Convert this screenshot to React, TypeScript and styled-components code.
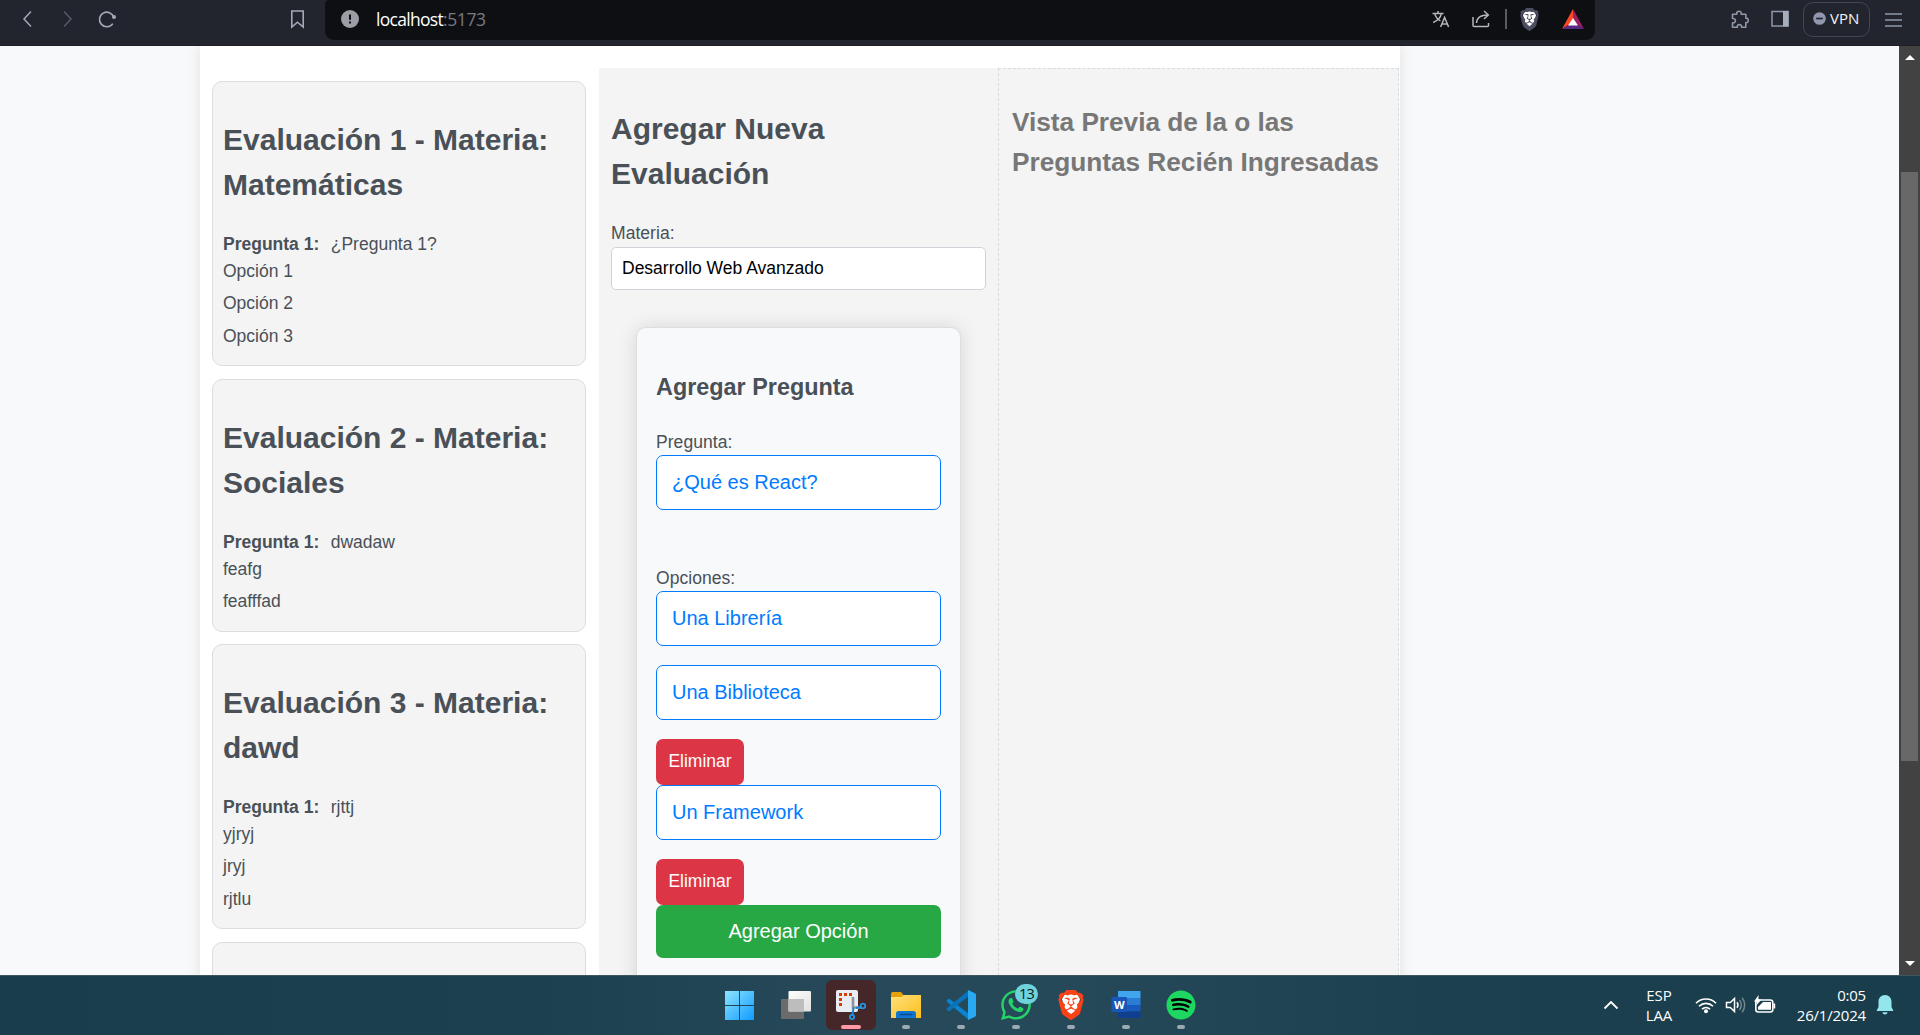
import React from "react";
import styled, { createGlobalStyle, css } from "styled-components";
import { FaBrave, FaSpotify, FaWhatsapp } from "react-icons/fa6";

const ui = `"Open Sans", "Noto Sans", sans-serif`;

const GlobalStyle = createGlobalStyle`
  *, *::before, *::after { box-sizing: border-box; }
  html, body { margin: 0; padding: 0; overflow: hidden; }
  body { font-family: Arial, "Liberation Sans", sans-serif; }
`;

const Screen = styled.div`
  display: flex;
  flex-direction: column;
  width: 1920px;
  height: 1035px;
  overflow: hidden;
`;

/* Browser toolbar */
const Toolbar = styled.header`
  display: flex;
  flex: none;
  height: 46px;
  background: #22252e;
  border-bottom: 1px solid #1f1d26;
  font-family: ${ui};
`;

const NavButtons = styled.nav`
  display: flex;
  align-items: center;
  width: 325px;
  height: 38px;
  padding: 0 18px 0 18px;
  color: #a2a9b8;
  svg { display: block; flex: none; }
`;

const Spacer = styled.span<{ $w?: number }>`
  flex: ${(p) => (p.$w ? "none" : 1)};
  width: ${(p) => (p.$w ? `${p.$w}px` : "auto")};
`;

const AddressBar = styled.div`
  display: flex;
  align-items: center;
  width: 1270px;
  height: 40px;
  padding: 0 10px 2px 16px;
  border-radius: 4px 0 9px 9px;
  background: #0e0f13;
  svg { display: block; flex: none; }
`;

const Url = styled.span`
  margin-left: 17px;
  flex: 1;
  font-size: 17.5px;
  letter-spacing: -0.7px;
  color: #fff;
  span { color: #777a80; letter-spacing: -0.4px; }
`;

const Divider = styled.i`
  width: 2px;
  height: 20px;
  margin: 0 13px 0 15px;
  background: #5a5b5f;
`;

const ToolbarActions = styled.div`
  display: flex;
  flex: 1;
  align-items: center;
  height: 38px;
  padding-right: 18px;
  color: #8f97a8;
  svg { display: block; flex: none; }
`;

const VpnButton = styled.div`
  display: flex;
  align-items: center;
  gap: 4px;
  width: 67px;
  height: 35px;
  margin: 0 15px 0 14px;
  padding: 0 0 2px 9px;
  border: 1px solid #434653;
  border-radius: 10px;
  color: #f2f3f5;
  font-size: 15px;
`;

/* Page area */
const Viewport = styled.main`
  display: flex;
  flex: none;
  height: 929px;
  overflow: hidden;
  background: #f8f9fb;
`;

const PageArea = styled.div`
  flex: 1;
  display: flex;
  padding-left: 200px;
  overflow: hidden;
`;

const Container = styled.div`
  display: flex;
  width: 1200px;
  height: 1300px;
  padding-top: 22px;
  background: #fff;
  box-shadow: 0 0 13px rgba(0, 0, 0, 0.1);
  color: #495057;
  font-size: 17.5px;
  line-height: 26.25px;
`;

const Heading = styled.h2`
  margin: 24.9px 0;
  font-size: 30px;
  line-height: 45px;
  font-weight: 700;
`;

const SavedColumn = styled.section`
  display: flex;
  flex-direction: column;
  gap: 12.5px;
  width: 399px;
  padding: 13px 13px 0 12px;
`;

const SavedCard = styled.article`
  flex: none;
  display: flow-root;
  min-height: 252px;
  padding: 10px 10px 10.1px;
  border: 1px solid #dcdddf;
  border-radius: 10px;
  background: #f4f4f4;
  ${Heading} { margin: 24.9px 0 24.4px; }
`;

const QuestionLine = styled.p`
  margin: 0;
  strong { margin-right: 6.6px; }
`;

const OptionList = styled.ul`
  margin: 0;
  padding: 0.2px 0 0;
  list-style: none;
`;

const OptionItem = styled.li`
  margin-bottom: 6.25px;
`;

const FormColumn = styled.section`
  width: 399px;
  padding: 13px 12px 0;
  background: #f4f4f4;
  > ${Heading} { margin-bottom: 24px; }
`;

const Label = styled.label<{ $loose?: boolean; $gap?: number }>`
  display: block;
  margin-bottom: ${(p) => p.$gap ?? 0}px;
  letter-spacing: ${(p) => (p.$loose ? "0.05px" : "0.05px")};
`;

const inputBase = css`
  display: block;
  width: 100%;
  outline: none;
  background: #fff;
  font-family: inherit;
`;

const SubjectInput = styled.input`
  ${inputBase}
  height: 43px;
  padding: 0 10px;
  border: 1px solid #ced4da;
  border-radius: 5px;
  color: #000;
  font-size: 17.5px;
`;

const QuestionCard = styled.div`
  display: flow-root;
  width: 325px;
  height: 760px;
  margin: 37px 0 0 25px;
  padding: 19px;
  border: 1px solid #dcdee1;
  border-radius: 10px;
  background: #f8f9fb;
  box-shadow: 0 0 19px rgba(0, 0, 0, 0.12);
`;

const CardTitle = styled.h3`
  margin: 22.5px 0 24.2px;
  font-size: 23.4px;
  line-height: 35px;
`;

const BlueInput = styled.input<{ $after?: number }>`
  ${inputBase}
  height: 55px;
  margin-bottom: ${(p) => p.$after ?? 19}px;
  padding: 0 15px;
  border: 1px solid #007bff;
  border-radius: 7px;
  color: #007bff;
  font-size: 20px;
`;

const RemoveButton = styled.button`
  display: block;
  width: 88px;
  height: 46px;
  padding: 0;
  border: 0;
  border-radius: 7px;
  background: #dc3545;
  color: #fff;
  font-family: inherit;
  font-size: 17.5px;
`;

const AddButton = styled.button`
  display: block;
  width: 100%;
  height: 53px;
  padding: 0;
  border: 0;
  border-radius: 7px;
  background: #28a745;
  color: #fff;
  font-family: inherit;
  font-size: 20px;
`;

const PreviewColumn = styled.section`
  width: 401px;
  padding: 12px 13px;
  border: 1px dashed #d9dadb;
  background: #f4f4f4;
  color: #777;
`;

const PreviewTitle = styled.h3`
  margin: 20.5px -10px 0 0;
  font-size: 26.25px;
  line-height: 40px;
  letter-spacing: -0.03px;
`;

/* Scrollbar */
const Scrollbar = styled.div`
  display: flex;
  flex-direction: column;
  align-items: center;
  width: 21px;
  padding: 9px 0;
  background: #424242;
`;

const Arrow = styled.i<{ $down?: boolean }>`
  width: 0;
  height: 0;
  border-left: 5px solid transparent;
  border-right: 5px solid transparent;
  ${(p) => (p.$down ? "border-top: 5px solid #fff;" : "border-bottom: 5px solid #fff;")}
`;

const Thumb = styled.i`
  width: 17px;
  height: 589px;
  margin: 112px 0 200px;
  background: #686868;
`;

/* Taskbar */
const Taskbar = styled.footer`
  display: flex;
  align-items: center;
  flex: 1;
  border-top: 1px solid #3f5560;
  background: linear-gradient(90deg, #1a3d4c 0%, #1c404e 28%, #27495a 44%, #26495a 56%, #1c404f 75%, #193d4b 100%);
  font-family: ${ui};
  color: #fff;
`;

const Apps = styled.div`
  display: flex;
  gap: 5px;
  margin: 0 0 1px 716px;
`;

const AppTile = styled.div<{ $active?: boolean; $open?: boolean }>`
  position: relative;
  display: flex;
  flex-direction: column;
  align-items: center;
  width: 50px;
  height: 50px;
  padding-top: 10px;
  border-radius: 6px;
  background: ${(p) => (p.$active ? "#462729" : "transparent")};
  svg { display: block; }
  &::after {
    content: "";
    width: ${(p) => (p.$active ? 20 : 8)}px;
    height: 4px;
    margin-top: 5px;
    border-radius: 2px;
    background: ${(p) => (p.$active ? "#ff99a4" : p.$open ? "#9aa9b2" : "transparent")};
  }
`;

const Badge = styled.span`
  position: absolute;
  left: 24px;
  top: 4px;
  width: 23px;
  height: 20px;
  border-radius: 10px;
  background: #6fd3dd;
  color: #0c1c20;
  font-size: 14.5px;
  letter-spacing: -0.8px;
  line-height: 20px;
  text-align: center;
`;

const Tray = styled.div`
  display: flex;
  align-items: center;
  flex: 1;
  justify-content: flex-end;
  padding: 0 26px 2px 0;
  font-size: 15px;
  line-height: 20px;
  svg { display: block; flex: none; }
`;

const Lang = styled.div`
  width: 40px;
  margin: 0 16px 0 20px;
  text-align: center;
  letter-spacing: -0.1px;
`;

const Clock = styled.div`
  width: 80px;
  margin: 0 10px 0 10px;
  text-align: right;
  letter-spacing: -0.2px;
  white-space: nowrap;
`;

const Stack = styled.span`
  display: grid;
  place-items: center;
  > * { grid-area: 1 / 1; }
`;

function BraveMark({ w, h, fill, plate }: { w: number; h: number; fill: string; plate: string }) {
  return (
    <Stack>
      <svg width={w} height={h} viewBox="0 0 26 30">
        <path d="M7 4 13 3 19 4 22 9 19 20 13 25 7 20 4 9Z" fill={plate} />
      </svg>
      <FaBrave color={fill} preserveAspectRatio="none" style={{ width: w, height: h }} />
    </Stack>
  );
}

const evaluations = [
  { subject: "Matemáticas", question: "¿Pregunta 1?", options: ["Opción 1", "Opción 2", "Opción 3"] },
  { subject: "Sociales", question: "dwadaw", options: ["feafg", "feafffad"] },
  { subject: "dawd", question: "rjttj", options: ["yjryj", "jryj", "rjtlu"] },
];

function BrowserBar() {
  return (
    <Toolbar>
      <NavButtons>
        <svg width="20" height="20" viewBox="0 0 20 20" fill="none" stroke="currentColor" strokeWidth="1.5">
          <path d="M13 2.5 6 10l7 7.5" />
        </svg>
        <Spacer $w={19} />
        <svg width="20" height="20" viewBox="0 0 20 20" fill="none" stroke="#565b67" strokeWidth="1.5">
          <path d="M7 2.5 14 10l-7 7.5" />
        </svg>
        <Spacer $w={20} />
        <svg width="20" height="20" viewBox="0 0 20 20" fill="none" stroke="currentColor" strokeWidth="1.6">
          <path d="M16.8 8.4A7.3 7.3 0 1 0 15.8 14.6" />
          <circle cx="17" cy="8" r="2" fill="currentColor" stroke="none" />
        </svg>
        <Spacer />
        <svg width="17" height="20" viewBox="0 0 17 20" fill="none" stroke="currentColor" strokeWidth="1.6">
          <path d="M2.8 2h11.4v16l-5.7-4.8L2.8 18z" />
        </svg>
        <Spacer $w={1} />
      </NavButtons>
      <AddressBar>
        <svg width="18" height="18" viewBox="0 0 18 18">
          <circle cx="9" cy="9" r="9" fill="#9b9ea4" />
          <path d="M9 4.5v5.3M9 11.4v2" stroke="#0e0f13" strokeWidth="2" />
        </svg>
        <Url>
          localhost<span>:5173</span>
        </Url>
        <svg width="18" height="18" viewBox="0 0 18 18" fill="none" stroke="#b4b6b9" strokeWidth="1.5">
          <path d="M.5 3.6h11M6 1v2.6M9.4 3.6C8.6 7.4 5.6 10.6 1.2 12.5M2.8 3.6c.8 3.4 2.6 5.6 5.6 7.2" />
          <path d="m8.6 17 4-9.5 4 9.5M10 14h5.3" />
        </svg>
        <Spacer $w={22} />
        <svg width="18" height="18" viewBox="0 0 18 18" fill="none" stroke="#b4b6b9" strokeWidth="1.5">
          <path d="M1 7v8.5c0 .6.3 1 1 1h13.5c.6 0 1-.4 1-1V13M4.5 13c.2-5 3.5-8 11.5-8M12 1l4.3 4-4.3 4" />
        </svg>
        <Divider />
        <BraveMark w={19} h={23} fill="#4b4d63" plate="#fff" />
        <Spacer $w={22} />
        <svg width="24" height="21" viewBox="0 0 24 21">
          <path d="M12 0 1 20l11-7z" fill="#ff4724" />
          <path d="M12 0l11 20-11-7z" fill="#9e1f63" />
          <path d="M1 20h22l-11-7z" fill="#5a2a82" />
          <path d="M12 9l5 7.5H7z" fill="#fff" />
        </svg>
      </AddressBar>
      <ToolbarActions>
        <Spacer />
        <svg width="18" height="19" viewBox="0 0 18 19" fill="none" stroke="currentColor" strokeWidth="1.6" strokeLinejoin="round">
          <path d="M1.5 4.2h4.3C5.5 2 6.5 1.200 8 1.200s2.600.9 2.200 3h4.600v4c1.800-.2 2.500.8 2.500 2.200s-.8 2.300-2.500 2.100v4.800h-4.300c.3-1.800-.7-2.700-2.100-2.700s-2.400.9-2.100 2.700H1.500v-4.400c2 .2 2.900-.8 2.900-2.200s-.9-2.400-2.900-2.200z" />
        </svg>
        <Spacer $w={22} />
        <svg width="18" height="18" viewBox="0 0 18 18">
          <rect x="1" y="1.5" width="16" height="14.5" fill="none" stroke="#8f97a8" strokeWidth="1.5" />
          <rect x="12" y="1" width="5.5" height="15.5" fill="#a6adbc" />
        </svg>
        <VpnButton>
          <svg width="13" height="13" viewBox="0 0 13 13">
            <circle cx="6.5" cy="6.5" r="6.3" fill="#9296b0" />
            <path d="M3.2 6.5h6.6" stroke="#22252e" strokeWidth="1.7" />
          </svg>
          VPN
        </VpnButton>
        <svg width="17" height="15" viewBox="0 0 17 15" stroke="currentColor" strokeWidth="1.5">
          <path d="M0 2h17M0 8h17M0 14h17" />
        </svg>
      </ToolbarActions>
    </Toolbar>
  );
}

function Tasks() {
  return (
    <Taskbar>
      <Apps>
        <AppTile>
          <svg width="30" height="30" viewBox="0 0 30 30" overflow="visible">
            <defs>
              <linearGradient id="win" x1="0" y1="0" x2="30" y2="30" gradientUnits="userSpaceOnUse">
                <stop offset="0" stopColor="#8ee3ff" />
                <stop offset="1" stopColor="#0a9aff" />
              </linearGradient>
            </defs>
            <path d="M-1 1h14v14H-1zM14 1h14v14H14zM-1 16h14v14H-1zM14 16h14v14H14z" fill="url(#win)" />
          </svg>
        </AppTile>
        <AppTile>
          <svg width="30" height="30" viewBox="0 0 30 30">
            <defs>
              <linearGradient id="tv" x1="0" y1="0" x2="1" y2="1">
                <stop offset="0" stopColor="#fff" />
                <stop offset="1" stopColor="#e0e0e0" />
              </linearGradient>
            </defs>
            <rect x="0" y="9" width="23" height="20" rx="1" fill="#6b6b6b" />
            <rect x="7.5" y="1" width="22.5" height="20.5" rx="1" fill="url(#tv)" />
            <path d="M7.5 9H23v12.5H7.5z" fill="#bdbdbd" />
          </svg>
        </AppTile>
        <AppTile $active>
          <svg width="30" height="30" viewBox="0 0 30 30">
            <rect x="0" y="0" width="22" height="22" rx="2" fill="#e9edf2" />
            <path d="M3 3h3v3H3zM8 3h3v3H8zM13 3h3v3h-3zM3 8h3v3H3zM3 13h3v3H3z" fill="#d83b01" />
            <path d="M17 7v10.5h8" fill="none" stroke="#8b949e" strokeWidth="2.6" />
            <path d="M17.5 17.5 16.5 25M20 18l5-1" stroke="#1a86d0" strokeWidth="2" />
            <circle cx="27" cy="16" r="2.3" fill="none" stroke="#1f97e5" strokeWidth="1.8" />
            <circle cx="16" cy="27" r="2.1" fill="none" stroke="#1f97e5" strokeWidth="1.8" />
          </svg>
        </AppTile>
        <AppTile $open>
          <svg width="30" height="30" viewBox="0 0 30 30">
            <defs>
              <linearGradient id="fold" x1="0" y1="0" x2="1" y2="1">
                <stop offset="0" stopColor="#ffe07a" />
                <stop offset="1" stopColor="#fdbf1e" />
              </linearGradient>
            </defs>
            <path d="M0 3.5Q0 2 1.5 2H10l3 3.5-3 4H0z" fill="#e3a008" />
            <path d="M0 7h10l3-2h17v23H0z" fill="url(#fold)" />
            <path d="M5 28v-4.5Q5 21 7.5 21h15q2.5 0 2.5 2.5V28z" fill="#1176d0" />
            <path d="M8.5 24.5h13" stroke="#0b4a94" strokeWidth="1.5" />
          </svg>
        </AppTile>
        <AppTile $open>
          <svg width="30" height="30" viewBox="0 0 30 30">
            <path d="M.8 10.3 3 8.5l20 15.5V30L.8 11.7z" fill="#0a84d0" />
            <path d="M.8 19.7 3 21.5 23 6V0L.8 18.3z" fill="#0972b9" />
            <path d="m22 0 6.500 3q1.500.7 1.500 2v20q0 1.300-1.500 2L22 30z" fill="#29a9f2" />
          </svg>
        </AppTile>
        <AppTile $open>
          <FaWhatsapp color="#25d366" style={{ width: 34, height: 34, margin: "-2px" }} />
          <Badge>13</Badge>
        </AppTile>
        <AppTile $open>
          <BraveMark w={26} h={30} fill="#fb4116" plate="#fff" />
        </AppTile>
        <AppTile $open>
          <svg width="30" height="30" viewBox="0 0 30 30">
            <path d="M7 1h22.5v7H7z" fill="#41a5ee" />
            <path d="M7 8h22.5v7H7z" fill="#2b7cd3" />
            <path d="M7 15h22.5v6.5H7z" fill="#185abd" />
            <path d="M7 21.5h22.5V28H7z" fill="#103f91" />
            <rect x="0.5" y="7" width="15.5" height="15" rx="1" fill="#1a56b8" />
            <text x="8.2" y="18.5" textAnchor="middle" fill="#fff" fontSize="11" fontWeight="700" fontFamily="Open Sans, sans-serif">W</text>
          </svg>
        </AppTile>
        <AppTile $open>
          <Stack>
            <svg width="30" height="30" viewBox="0 0 30 30">
              <circle cx="15" cy="15" r="12" fill="#000" />
            </svg>
            <FaSpotify color="#1ed760" size={30} />
          </Stack>
        </AppTile>
      </Apps>
      <Tray>
        <svg width="16" height="10" viewBox="0 0 16 10" fill="none" stroke="#fff" strokeWidth="1.8">
          <path d="m1.5 8.5 6.5-6.5 6.5 6.5" />
        </svg>
        <Lang>
          ESP
          <br />
          LAA
        </Lang>
        <svg width="22" height="18" viewBox="0 0 22 18" fill="none" stroke="#fff" strokeWidth="1.6">
          <path d="M1 7.2a14 14 0 0 1 20 0M4 10.2a10 10 0 0 1 14 0M7 13.2a6 6 0 0 1 8 0" />
          <circle cx="11" cy="15.3" r="2" fill="#fff" stroke="none" />
        </svg>
        <Spacer $w={8} />
        <svg width="22" height="18" viewBox="0 0 22 18" fill="none" stroke="#fff" strokeWidth="1.5">
          <path d="M1.5 6.5h3.8l4.2-4v13l-4.2-4H1.5zM12 6.200q2 2.800 0 5.600" />
          <path d="M14.5 4q3.6 5 0 10M17.2 1.8q5 7.2 0 14.4" stroke="#71868f" />
        </svg>
        <Spacer $w={7} />
        <svg width="22" height="19" viewBox="0 0 22 19">
          <rect x="1.8" y="5" width="17" height="12" rx="2.5" fill="none" stroke="#fff" strokeWidth="1.6" />
          <path d="M4 14.8V12l5-5h8v7.8zM19.5 8.5h1.7v5h-1.7z" fill="#fff" />
          <path d="M4.5 0 0 6.5h3L1.8 11 7.5 4.500h-3z" fill="#fff" />
        </svg>
        <Clock>
          0:05
          <br />
          26/1/2024
        </Clock>
        <svg width="18" height="20" viewBox="0 0 18 20" fill="#93e6ec">
          <path d="M9 0C5 0 2.500 3 2.500 6.500V12L.5 16h17l-2-4V6.500C15.500 3 13 0 9 0zM6.300 17.200h5.400q-.6 2.300-2.700 2.300t-2.700-2.300z" />
        </svg>
      </Tray>
    </Taskbar>
  );
}

export default function App() {
  return (
    <Screen>
      <GlobalStyle />
      <BrowserBar />
      <Viewport>
        <PageArea>
          <Container>
            <SavedColumn>
              {evaluations.map((ev, i) => (
                <SavedCard key={i}>
                  <Heading>
                    Evaluación {i + 1} - Materia: {ev.subject}
                  </Heading>
                  <QuestionLine>
                    <strong>Pregunta 1:</strong> {ev.question}
                  </QuestionLine>
                  <OptionList>
                    {ev.options.map((o) => (
                      <OptionItem key={o}>{o}</OptionItem>
                    ))}
                  </OptionList>
                </SavedCard>
              ))}
              <SavedCard />
            </SavedColumn>
            <FormColumn>
              <Heading>Agregar Nueva Evaluación</Heading>
              <Label $gap={0.9}>Materia:</Label>
              <SubjectInput defaultValue="Desarrollo Web Avanzado" />
              <QuestionCard>
                <CardTitle>Agregar Pregunta</CardTitle>
                <Label $loose>Pregunta:</Label>
                <BlueInput defaultValue="¿Qué es React?" $after={54.7} />
                <Label $loose>Opciones:</Label>
                <BlueInput defaultValue="Una Librería" />
                <BlueInput defaultValue="Una Biblioteca" />
                <RemoveButton>Eliminar</RemoveButton>
                <BlueInput defaultValue="Un Framework" />
                <RemoveButton>Eliminar</RemoveButton>
                <AddButton>Agregar Opción</AddButton>
              </QuestionCard>
            </FormColumn>
            <PreviewColumn>
              <PreviewTitle>Vista Previa de la o las Preguntas Recién Ingresadas</PreviewTitle>
            </PreviewColumn>
          </Container>
        </PageArea>
        <Scrollbar>
          <Arrow />
          <Thumb />
          <Arrow $down />
        </Scrollbar>
      </Viewport>
      <Tasks />
    </Screen>
  );
}
